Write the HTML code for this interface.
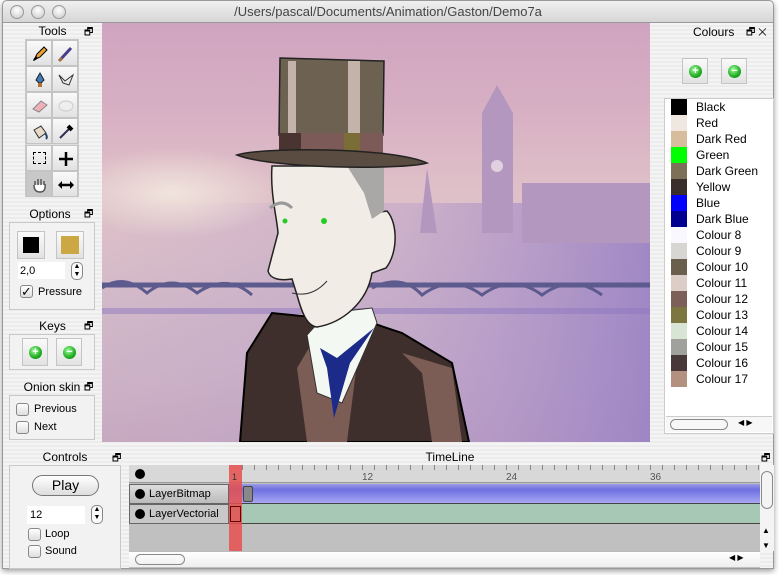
<!DOCTYPE html>
<html><head><style>
*{margin:0;padding:0;box-sizing:border-box}
body{width:779px;height:575px;background:#fff;font-family:"Liberation Sans",sans-serif;font-size:11px;color:#000;position:relative;overflow:hidden}
.win{position:absolute;left:2px;top:0;width:772px;height:569px;background:repeating-linear-gradient(#ececec 0 2px,#f4f4f4 2px 4px);border:1px solid #999;border-radius:5px 5px 0 0;box-shadow:0 2px 6px rgba(0,0,0,.4)}
.title{position:absolute;left:0;top:0;width:100%;height:22px;background:linear-gradient(#f0f0f0,#d6d6d6);border-bottom:1px solid #999;border-radius:5px 5px 0 0;text-align:center;font-size:13px;line-height:22px;color:#444}
.tl{position:absolute;top:4px;width:14px;height:14px;border-radius:50%;background:radial-gradient(circle at 50% 35%,#fff,#c8c8c8);border:1px solid #999}
.a{position:absolute}
.ph{position:absolute;font-size:12px;text-align:center}
.box{position:absolute;border:1px solid #c8c8c8;background:#f2f2f2}
.btn{position:absolute;width:26px;height:26px;background:linear-gradient(#fafafa,#e2e2e2);border:1px solid #c4c4c4}
.btn svg{position:absolute;left:4px;top:4px}
.ck{position:absolute;width:13px;height:13px;border:1px solid #888;border-radius:3px;background:linear-gradient(#fff,#ddd)}
.gp{position:absolute;width:13px;height:13px;border-radius:50%;background:radial-gradient(circle at 40% 35%,#9f9,#2a2 60%,#080);color:#fff;font-weight:bold;font-size:11px;line-height:12px;text-align:center}
.sw{position:absolute;left:671px;width:16px;height:16px}
.cn{position:absolute;left:696px;font-size:12px}
</style></head><body>
<div class="win">
<div class="title">/Users/pascal/Documents/Animation/Gaston/Demo7a</div>
<div class="tl" style="left:7px"></div><div class="tl" style="left:28px"></div><div class="tl" style="left:49px"></div>
</div>
<!-- left panels -->
<div class="ph" style="left:30px;top:24px;width:45px">Tools</div><div class="a" style="left:84px;top:25px;font-size:10px">🗗</div>
<div class="box" style="left:25px;top:39px;width:54px;height:158px;background:#ddd"></div>
<div class="btn" style="left:26px;top:40px"><svg width="18" height="18"><path d="M3 15 L6 9 L13 2 L16 5 L9 12 Z" fill="#e8a030" stroke="#000"/><path d="M3 15 L6 12" stroke="#000" stroke-width="2"/></svg></div>
<div class="btn" style="left:52px;top:40px"><svg width="18" height="18"><path d="M3 15 L14 3" stroke="#4a3b8c" stroke-width="3"/><path d="M2 16 L5 13" stroke="#a07040" stroke-width="3"/></svg></div>
<div class="btn" style="left:26px;top:66px"><svg width="18" height="18"><path d="M9 2 L13 9 L10 12 L8 12 L5 9 Z" fill="#4a78b0" stroke="#123"/><rect x="7" y="12" width="4" height="4" fill="#b07030"/></svg></div>
<div class="btn" style="left:52px;top:66px"><svg width="18" height="18"><path d="M2 4 L8 10 L16 4 L12 14 L6 12 Z" fill="none" stroke="#333"/></svg></div>
<div class="btn" style="left:26px;top:92px"><svg width="18" height="18"><path d="M2 12 L10 4 L16 8 L8 15 Z" fill="#f0b0b8" stroke="#888"/></svg></div>
<div class="btn" style="left:52px;top:92px"><svg width="18" height="18"><ellipse cx="9" cy="9" rx="7" ry="5" fill="#eee" stroke="#ccc"/></svg></div>
<div class="btn" style="left:26px;top:118px"><svg width="18" height="18"><path d="M3 7 L10 3 L15 10 L8 15 Z" fill="#e8d8c8" stroke="#333"/><path d="M14 10 Q17 14 15 16" stroke="#246" stroke-width="2" fill="none"/></svg></div>
<div class="btn" style="left:52px;top:118px"><svg width="18" height="18"><path d="M3 15 L12 6" stroke="#335" stroke-width="2"/><path d="M11 3 L15 7" stroke="#000" stroke-width="4"/></svg></div>
<div class="btn" style="left:26px;top:145px"><div class="a" style="left:6px;top:6px;width:13px;height:12px;border:1px dashed #000"></div></div>
<div class="btn" style="left:52px;top:145px"><svg width="18" height="18"><path d="M9 2 V16 M2 9 H16" stroke="#000" stroke-width="2.5"/></svg></div>
<div class="btn" style="left:26px;top:171px;background:#c8c8c8"><svg width="18" height="18"><path d="M4 9 L4 5 M7 9 L7 3 M10 9 L10 3 M13 9 L13 5 M3 9 Q3 16 9 16 Q15 16 14 8" stroke="#555" fill="#fff" stroke-width="1.5"/></svg></div>
<div class="btn" style="left:52px;top:171px"><svg width="18" height="18"><path d="M3 9 H15" stroke="#000" stroke-width="2.5"/><path d="M1 9 L5 5 L5 13 Z M17 9 L13 5 L13 13 Z" fill="#000"/></svg></div>
<div class="ph" style="left:25px;top:207px;width:50px">Options</div><div class="a" style="left:84px;top:207px;font-size:10px">🗗</div>
<div class="box" style="left:9px;top:222px;width:86px;height:88px"></div>
<div class="btn" style="left:17px;top:231px;width:28px;height:28px"><div class="a" style="left:5px;top:5px;width:16px;height:16px;background:#000"></div></div>
<div class="btn" style="left:56px;top:231px;width:28px;height:28px"><div class="a" style="left:4px;top:4px;width:18px;height:18px;background:#cba844"></div></div>
<div class="a" style="left:18px;top:262px;width:47px;height:17px;background:#fff;padding:3px 2px">2,0</div>
<div class="a" style="left:71px;top:262px;width:12px;height:18px;border:1px solid #888;border-radius:5px;background:#fafafa;font-size:7px;text-align:center;line-height:8px">▲<br>▼</div>
<div class="ck" style="left:20px;top:285px;font-size:13px;line-height:11px">✓</div><div class="a" style="left:38px;top:286px">Pressure</div>
<div class="ph" style="left:30px;top:319px;width:45px">Keys</div><div class="a" style="left:84px;top:319px;font-size:10px">🗗</div>
<div class="box" style="left:9px;top:334px;width:86px;height:36px"></div>
<div class="btn" style="left:22px;top:338px;width:26px;height:28px"><div class="gp" style="left:6px;top:7px">+</div></div>
<div class="btn" style="left:56px;top:338px;width:26px;height:28px"><div class="gp" style="left:6px;top:7px">−</div></div>
<div class="ph" style="left:22px;top:380px;width:60px">Onion skin</div><div class="a" style="left:84px;top:380px;font-size:10px">🗗</div>
<div class="box" style="left:9px;top:395px;width:86px;height:45px"></div>
<div class="ck" style="left:16px;top:403px"></div><div class="a" style="left:34px;top:403px">Previous</div>
<div class="ck" style="left:16px;top:421px"></div><div class="a" style="left:34px;top:421px">Next</div>
<!-- canvas -->
<div class="a" style="left:102px;top:23px;width:548px;height:419px;overflow:hidden;background:linear-gradient(#cfa4c0 0%,#d7afc3 20%,#dfc0c8 40%,#d9bdc8 55%,#d1b8c8 68%,#cdb2c6 85%,#c7a9c0 100%)">
<svg width="548" height="419" style="position:absolute;left:0;top:0">
<defs><linearGradient id="r" x1="0" x2="1"><stop offset="0" stop-color="#b09ad0" stop-opacity="0"/><stop offset=".55" stop-color="#a78ecb" stop-opacity=".3"/><stop offset="1" stop-color="#9a82c4" stop-opacity=".9"/></linearGradient>
<radialGradient id="m" cx=".5" cy=".5" r=".5"><stop offset="0" stop-color="#f0e4dc"/><stop offset="1" stop-color="#f0e4dc" stop-opacity="0"/></radialGradient></defs>
<rect x="0" y="180" width="548" height="239" fill="url(#r)"/>
<ellipse cx="70" cy="170" rx="110" ry="45" fill="url(#m)"/>
<g fill="#b497be"><rect x="380" y="90" width="31" height="120"/><polygon points="380,90 395,62 411,90"/><polygon points="318,210 325,145 335,210"/><rect x="420" y="160" width="128" height="60"/></g>
<circle cx="395" cy="143" r="6" fill="#e0d0e0"/>
<path d="M0 262 H548" stroke="#5d5a8e" stroke-width="5"/>
<g fill="none" stroke="#5d5a8e" stroke-width="3"><path d="M0 265 Q22 250 45 270 Q70 250 95 270 Q125 250 150 272"/><path d="M270 265 Q300 250 320 272 Q350 250 380 272 Q410 250 440 272 Q470 250 500 272"/></g>
<rect x="0" y="285" width="548" height="6" fill="#8d78c0" opacity=".5"/>
<path d="M170 290 L145 330 L138 419 L367 419 L350 340 L300 310 L270 300 Z" fill="#3f2f2c" stroke="#000" stroke-width="2"/>
<path d="M210 320 L195 345 L205 419 L245 419 L255 340 Z" fill="#7b5d55"/>
<path d="M300 330 L320 350 L330 419 L360 419 L350 345 Z" fill="#7b5d55"/>
<path d="M205 312 L225 290 L270 285 L275 300 L240 380 L215 370 Z" fill="#f4f8f2" stroke="#333"/>
<path d="M218 325 L235 335 L272 305 L248 340 L232 395 L225 345 Z" fill="#1c2a8a"/>
<path d="M170 143 C168 170 175 195 176 210 L166 248 C168 256 178 258 190 256 L195 272 C200 290 205 303 215 304 C240 300 265 280 270 250 L284 245 C296 230 296 200 285 188 L272 190 C272 170 275 150 280 143 Z" fill="#f2ece6" stroke="#222" stroke-width="1.5"/>
<path d="M245 143 L282 143 L282 188 L270 196 L262 170 Z" fill="#a9a8a6"/>
<path d="M168 185 Q180 175 190 185" stroke="#999" stroke-width="3" fill="none"/>
<circle cx="222" cy="198" r="3" fill="#2c2"/><circle cx="183" cy="198" r="2.5" fill="#2c2"/>
<path d="M190 270 Q210 275 225 258" stroke="#333" fill="none"/>
<path d="M178 35 L282 38 L281 112 L177 112 Z" fill="#6d6252" stroke="#222" stroke-width="1.5"/>
<rect x="186" y="38" width="8" height="74" fill="#d8c8c0" opacity=".8"/><rect x="246" y="38" width="12" height="74" fill="#d8c8c0" opacity=".8"/>
<rect x="177" y="110" width="104" height="23" fill="#7c5a58"/><rect x="242" y="110" width="16" height="23" fill="#7a6e36"/><rect x="177" y="110" width="22" height="23" fill="#4a3432"/>
<path d="M135 132 C160 124 290 124 325 140 C300 147 170 146 135 132Z" fill="#5a4c40" stroke="#222" stroke-width="1.5"/>
</svg></div>
<!-- right panel -->
<div class="a" style="left:693px;top:25px;font-size:12px">Colours</div><div class="a" style="left:746px;top:25px;font-size:10px">🗗 ✕</div>
<div class="btn" style="left:682px;top:58px;width:26px;height:26px"><div class="gp" style="left:6px;top:6px">+</div></div>
<div class="btn" style="left:721px;top:58px;width:26px;height:26px"><div class="gp" style="left:6px;top:6px">−</div></div>
<div class="a" style="left:664px;top:98px;width:110px;height:336px;background:#fff;border:1px solid #ccc"></div>
<div class="sw" style="top:99px;background:#000"></div><div class="cn" style="top:100px">Black</div>
<div class="sw" style="top:115px;background:#f1e7e1"></div><div class="cn" style="top:116px">Red</div>
<div class="sw" style="top:131px;background:#d8bd9d"></div><div class="cn" style="top:132px">Dark Red</div>
<div class="sw" style="top:147px;background:#0f0"></div><div class="cn" style="top:148px">Green</div>
<div class="sw" style="top:163px;background:#7c7058"></div><div class="cn" style="top:164px">Dark Green</div>
<div class="sw" style="top:179px;background:#3a2e2a"></div><div class="cn" style="top:180px">Yellow</div>
<div class="sw" style="top:195px;background:#00f"></div><div class="cn" style="top:196px">Blue</div>
<div class="sw" style="top:211px;background:#000090"></div><div class="cn" style="top:212px">Dark Blue</div>
<div class="sw" style="top:227px;background:#f9f8ff"></div><div class="cn" style="top:228px">Colour 8</div>
<div class="sw" style="top:243px;background:#d8d6d2"></div><div class="cn" style="top:244px">Colour 9</div>
<div class="sw" style="top:259px;background:#6a5e4c"></div><div class="cn" style="top:260px">Colour 10</div>
<div class="sw" style="top:275px;background:#dccdc6"></div><div class="cn" style="top:276px">Colour 11</div>
<div class="sw" style="top:291px;background:#7c5f58"></div><div class="cn" style="top:292px">Colour 12</div>
<div class="sw" style="top:307px;background:#7c7640"></div><div class="cn" style="top:308px">Colour 13</div>
<div class="sw" style="top:323px;background:#d8e4d4"></div><div class="cn" style="top:324px">Colour 14</div>
<div class="sw" style="top:339px;background:#a0a09c"></div><div class="cn" style="top:340px">Colour 15</div>
<div class="sw" style="top:355px;background:#48383a"></div><div class="cn" style="top:356px">Colour 16</div>
<div class="sw" style="top:371px;background:#b49080"></div><div class="cn" style="top:372px">Colour 17</div>
<div class="a" style="left:666px;top:416px;width:106px;height:16px;border-top:1px solid #ccc;background:#f7f7f7"><div class="a" style="left:4px;top:2px;width:58px;height:11px;border:1px solid #888;border-radius:6px"></div><div class="a" style="left:72px;top:1px;font-size:8px">◀ ▶</div></div>
<!-- bottom -->
<div class="ph" style="left:30px;top:450px;width:70px">Controls</div><div class="a" style="left:112px;top:451px;font-size:10px">🗗</div>
<div class="box" style="left:9px;top:465px;width:112px;height:104px"></div>
<div class="a" style="left:32px;top:475px;width:67px;height:21px;border:1px solid #777;border-radius:11px;background:linear-gradient(#fff,#ddd);text-align:center;font-size:14px;line-height:19px">Play</div>
<div class="a" style="left:27px;top:506px;width:58px;height:18px;background:#fff;padding:3px 3px">12</div>
<div class="a" style="left:91px;top:505px;width:12px;height:19px;border:1px solid #888;border-radius:5px;background:#fafafa;font-size:7px;text-align:center;line-height:8px">▲<br>▼</div>
<div class="ck" style="left:28px;top:528px"></div><div class="a" style="left:45px;top:528px">Loop</div>
<div class="ck" style="left:28px;top:545px"></div><div class="a" style="left:45px;top:545px">Sound</div>
<div class="ph" style="left:400px;top:450px;width:100px">TimeLine</div><div class="a" style="left:761px;top:451px;font-size:10px">🗗</div>
<div class="a" style="left:129px;top:465px;width:631px;height:103px;background:#c0c0c0"></div>
<div class="a" style="left:129px;top:465px;width:631px;height:18px;background:#d8d8d8;border-bottom:1px solid #999"></div>
<div class="a" style="left:135px;top:469px;width:10px;height:10px;border-radius:50%;background:#000"></div>
<div class="a" style="left:362px;top:472px;font-size:10px;color:#555">12</div><div class="a" style="left:506px;top:472px;font-size:10px;color:#555">24</div><div class="a" style="left:650px;top:472px;font-size:10px;color:#555">36</div>
<div class="a" style="left:242px;top:465px;width:518px;height:5px;background:repeating-linear-gradient(90deg,#888 0 1px,transparent 1px 12px)"></div>
<div class="a" style="left:129px;top:484px;width:100px;height:20px;background:linear-gradient(#ddd,#bbb);border:1px solid #666"><span style="display:inline-block;width:10px;height:10px;border-radius:50%;background:#000;margin:4px 4px 0 5px;vertical-align:top"></span><span style="line-height:18px">LayerBitmap</span></div>
<div class="a" style="left:129px;top:504px;width:100px;height:20px;background:#c8c8c8;border:1px solid #666"><span style="display:inline-block;width:10px;height:10px;border-radius:50%;background:#000;margin:4px 4px 0 5px;vertical-align:top"></span><span style="line-height:18px">LayerVectorial</span></div>
<div class="a" style="left:229px;top:484px;width:531px;height:20px;background:linear-gradient(#9a9ae8,#6f6fe0 30%,#a8a8f4);border-bottom:1px solid #444"></div>
<div class="a" style="left:229px;top:504px;width:531px;height:20px;background:#a6c8b5;border-bottom:1px solid #444"></div>
<div class="a" style="left:229px;top:465px;width:13px;height:86px;background:rgba(230,80,80,.85)"></div>
<div class="a" style="left:232px;top:472px;font-size:9px;color:#333">1</div>
<div class="a" style="left:243px;top:486px;width:10px;height:16px;background:#888;border:1px solid #444;border-radius:2px"></div>
<div class="a" style="left:230px;top:506px;width:11px;height:16px;border:1px solid #600"></div>
<div class="a" style="left:129px;top:551px;width:631px;height:16px;background:linear-gradient(#fff,#eee);border-top:1px solid #bbb"><div class="a" style="left:6px;top:2px;width:50px;height:11px;border:1px solid #888;border-radius:6px"></div><div class="a" style="left:600px;top:1px;font-size:8px">◀ ▶</div></div>
<div class="a" style="left:760px;top:465px;width:14px;height:86px;background:#f4f4f4"><div class="a" style="left:1px;top:6px;width:12px;height:38px;border:1px solid #888;border-radius:6px"></div><div class="a" style="left:2px;top:58px;font-size:8px;line-height:15px">▲<br>▼</div></div>
</body></html>
